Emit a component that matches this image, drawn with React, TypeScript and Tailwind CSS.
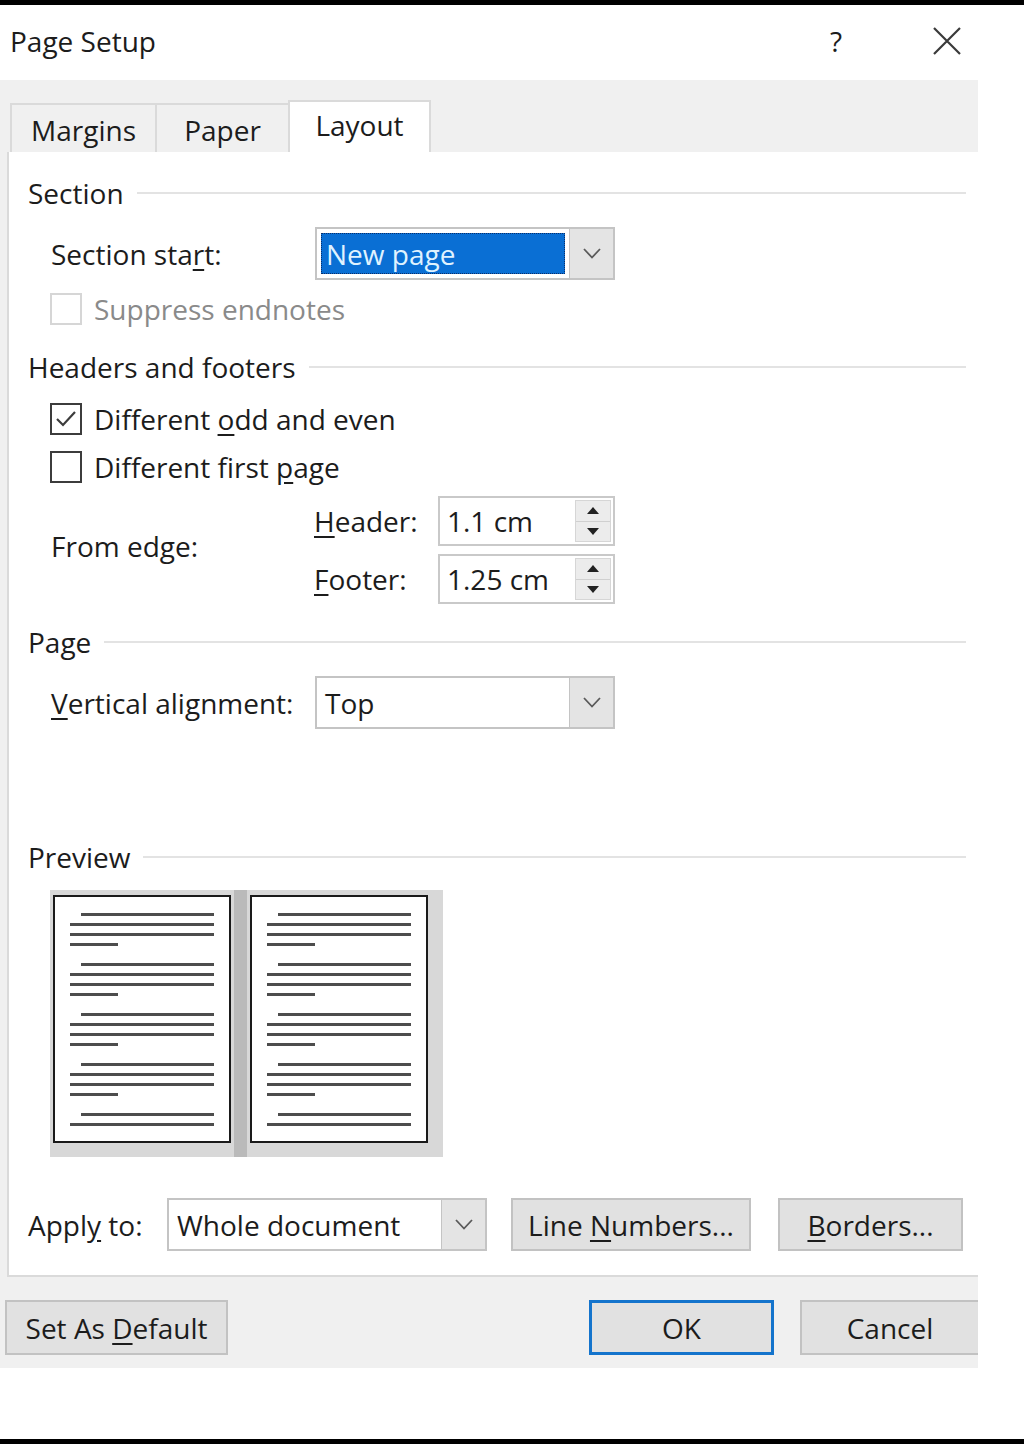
import React from 'react';

const font = "font-['Open_Sans',sans-serif]";

function GroupTitle({label}: {label: string}) {
  return (
    <div className="flex h-[34px] items-center">
      <span className="leading-none">{label}</span>
      <div className="ml-[13px] mr-[12px] h-[2px] flex-1 bg-[#e3e3e3]" />
    </div>
  );
}

function Chevron() {
  return (
    <svg width="20" height="13" viewBox="0 0 20 13" fill="none">
      <path d="M2 2 L10 10.5 L18 2" stroke="#5a5a5a" strokeWidth="1.8" />
    </svg>
  );
}

function Select({value, width, selected}: {value: string; width: string; selected?: boolean}) {
  return (
    <div className={`flex h-[53px] ${width} border-2 border-[#c4c4c4] bg-white`}>
      <div className="flex flex-1 items-center p-[4px]">
        {selected ? (
          <div className="flex h-full w-full items-center border border-dotted border-[#0b2f6a] bg-[#0a6fd4] pl-[4px] text-[#dff2ff]">
            {value}
          </div>
        ) : (
          <span className="pl-[4px]">{value}</span>
        )}
      </div>
      <div className="flex w-[44px] items-center justify-center border-l border-[#c4c4c4] bg-[#e4e4e4]">
        <Chevron />
      </div>
    </div>
  );
}

function Checkbox({checked, disabled}: {checked?: boolean; disabled?: boolean}) {
  return (
    <div
      className={`flex h-[32px] w-[32px] items-center justify-center border-2 bg-white ${
        disabled ? 'border-[#d6d6d6]' : 'border-[#3c3c3c]'
      }`}
    >
      {checked && (
        <svg width="24" height="20" viewBox="0 0 24 20" fill="none">
          <path d="M3 10 L9 16 L21 3" stroke="#3c3c3c" strokeWidth="2.2" />
        </svg>
      )}
    </div>
  );
}

function Spin({value}: {value: string}) {
  return (
    <div className="flex h-[50px] w-[177px] border-2 border-[#c9c9c9] bg-white">
      <span className="flex flex-1 items-center pl-[7px]">{value}</span>
      <div className="my-[2px] mr-[2px] flex w-[36px] flex-col border border-[#d6d6d6]">
        <div className="flex flex-1 items-center justify-center border-b border-[#d0d0d0] bg-[#ececec]">
          <svg width="14" height="9" viewBox="0 0 14 9">
            <path d="M1 8 L7 1 L13 8 Z" fill="#222" />
          </svg>
        </div>
        <div className="flex flex-1 items-center justify-center bg-[#ececec]">
          <svg width="14" height="9" viewBox="0 0 14 9">
            <path d="M1 1 L7 8 L13 1 Z" fill="#222" />
          </svg>
        </div>
      </div>
    </div>
  );
}

function Button({children, className = ''}: {children: React.ReactNode; className?: string}) {
  return (
    <div className={`flex items-center justify-center border-2 border-[#c2c2c2] bg-[#e1e1e1] ${className}`}>
      <span>{children}</span>
    </div>
  );
}

function PreviewPage() {
  const para = (last: boolean) => (
    <div className="flex flex-col gap-[7px]">
      <div className="ml-[11px] h-[3px] bg-[#4d4d4d]" />
      <div className="h-[3px] bg-[#4d4d4d]" />
      {!last && <div className="h-[3px] bg-[#4d4d4d]" />}
      {!last && <div className="h-[3px] w-[48px] bg-[#4d4d4d]" />}
    </div>
  );
  return (
    <div className="mt-[5px] flex h-[248px] w-[178px] flex-col gap-[17px] border-2 border-[#1a1a1a] bg-white px-[15px] pt-[16px]">
      {para(false)}
      {para(false)}
      {para(false)}
      {para(false)}
      {para(true)}
    </div>
  );
}

export default function App() {
  return (
    <div className={`flex h-[1444px] w-[1024px] flex-col bg-white text-[28px] leading-none text-[#1c1c1c] ${font}`}>
      <div className="h-[5px] bg-black" />

      {/* title bar */}
      <div className="flex h-[75px] items-center pb-[3px] pl-[10px]">
        <span>Page Setup</span>
        <span className="ml-auto">?</span>
        <svg className="ml-[90px] mr-[62px]" width="30" height="30" viewBox="0 0 30 30" fill="none">
          <path d="M2 2 L28 28 M28 2 L2 28" stroke="#3a3a3a" strokeWidth="2.2" />
        </svg>
      </div>

      <div className="flex w-[978px] flex-col bg-[#f0f0f0] pt-[20px] pb-[13px]">
        {/* tabs */}
        <div className="flex h-[52px] items-end pl-[10px]">
          <div className="flex h-[49px] w-[145px] items-center justify-center border-t-2 border-l-2 border-[#dadada] pt-[2px]">
            Margins
          </div>
          <div className="flex h-[49px] w-[133px] items-center justify-center border-t-2 border-l-2 border-[#dadada] pt-[2px]">
            Paper
          </div>
          <div className="flex h-[52px] w-[143px] items-center justify-center border-x-2 border-t-2 border-[#dadada] bg-white pb-[4px]">
            Layout
          </div>
        </div>

        {/* tab panel */}
        <div className="ml-[7px] flex h-[1125px] flex-col border-b-2 border-l-2 border-[#dadada] bg-white pt-[24px] pl-[19px]">
          <GroupTitle label="Section" />
          <div className="mt-[17px] flex items-center pl-[23px]">
            <span className="w-[264px]">
              Section sta<span className="underline underline-offset-4">r</span>t:
            </span>
            <Select value="New page" width="w-[300px]" selected />
          </div>
          <div className="mt-[13px] flex items-center pl-[22px]">
            <Checkbox disabled />
            <span className="ml-[12px] text-[#8a8a8a]">Suppress endnotes</span>
          </div>

          <div className="mt-[25px]">
            <GroupTitle label="Headers and footers" />
          </div>
          <div className="mt-[19px] flex items-center pl-[22px]">
            <Checkbox checked />
            <span className="ml-[12px]">
              Different <span className="underline underline-offset-4">o</span>dd and even
            </span>
          </div>
          <div className="mt-[16px] flex items-center pl-[22px]">
            <Checkbox />
            <span className="ml-[12px]">
              Different first <span className="underline underline-offset-4">p</span>age
            </span>
          </div>
          <div className="mt-[13px] flex items-center pl-[23px]">
            <span className="w-[263px] pb-[8px]">From edge:</span>
            <div className="flex flex-col gap-[8px]">
              <div className="flex items-center">
                <span className="w-[124px]">
                  <span className="underline underline-offset-4">H</span>eader:
                </span>
                <Spin value="1.1 cm" />
              </div>
              <div className="flex items-center">
                <span className="w-[124px]">
                  <span className="underline underline-offset-4">F</span>ooter:
                </span>
                <Spin value="1.25 cm" />
              </div>
            </div>
          </div>

          <div className="mt-[21px]">
            <GroupTitle label="Page" />
          </div>
          <div className="mt-[17px] flex items-center pl-[23px]">
            <span className="w-[264px]">
              <span className="underline underline-offset-4">V</span>ertical alignment:
            </span>
            <Select value="Top" width="w-[300px]" />
          </div>

          <div className="mt-[111px]">
            <GroupTitle label="Preview" />
          </div>
          <div className="mt-[16px] ml-[22px] flex h-[267px] w-[393px] bg-[#d8d8d8] pl-[3px]">
            <PreviewPage />
            <div className="mx-[3px] h-full w-[13px] bg-[#bababa]" />
            <PreviewPage />
          </div>

          <div className="mt-[41px] flex items-center">
            <span className="w-[139px]">
              Appl<span className="underline underline-offset-4">y</span> to:
            </span>
            <Select value="Whole document" width="w-[320px]" />
            <Button className="ml-[24px] h-[53px] w-[240px]">
              Line <span className="underline underline-offset-4">N</span>umbers...
            </Button>
            <Button className="ml-[27px] h-[53px] w-[185px]">
              <span className="underline underline-offset-4">B</span>orders...
            </Button>
          </div>
        </div>

        {/* footer buttons */}
        <div className="mt-[23px] flex items-center pl-[5px]">
          <Button className="h-[55px] w-[223px]">
            Set As <span className="underline underline-offset-4">D</span>efault
          </Button>
          <div className="ml-auto flex h-[55px] w-[185px] items-center justify-center border-[3px] border-[#1474cc] bg-[#e1e1e1]">
            OK
          </div>
          <Button className="ml-[26px] h-[55px] w-[178px] border-r-0">Cancel</Button>
        </div>
      </div>

      <div className="flex-1" />
      <div className="h-[5px] bg-black" />
    </div>
  );
}
